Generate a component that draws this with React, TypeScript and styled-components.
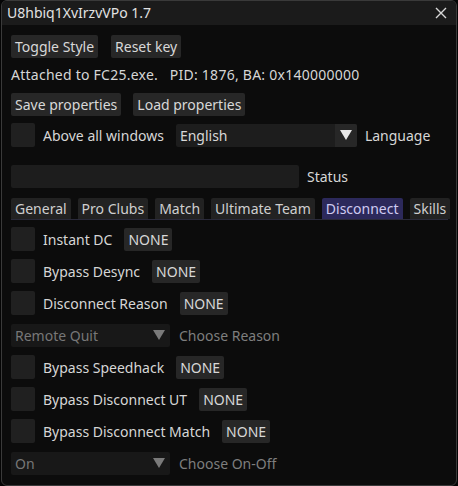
import React from "react";
import styled, { createGlobalStyle } from "styled-components";

const Global = createGlobalStyle`
  html, body { margin: 0; padding: 0; background: #050505; }
  body { font-family: "Noto Sans", "Open Sans", sans-serif; font-size: 14px; color: #d6d6d6; }
  * { box-sizing: border-box; }
`;

const Window = styled.div`
  width: 456px;
  height: 486px;
  margin-left: 1px;
  border: 1px solid #3a3a3a;
  border-radius: 6px;
  background: #0c0c0c;
  overflow: hidden;
  display: flex;
  flex-direction: column;
`;

const TitleBar = styled.div`
  height: 24px;
  background: #1b1b1b;
  display: flex;
  align-items: center;
  justify-content: space-between;
  padding: 0 6px 0 5px;
  flex-shrink: 0;
`;

const Title = styled.span`
  color: #e2e2e2;
  line-height: 24px;
`;

const Close = styled.svg`
  width: 12px;
  height: 12px;
  margin-right: 3px;
`;

const Body = styled.div`
  display: flex;
  flex-direction: column;
  padding: 9px 8px 0 9px;
`;

const Row = styled.div<{ $gap?: number; $mt?: number }>`
  display: flex;
  align-items: center;
  gap: ${(p) => p.$gap ?? 12}px;
  margin-top: ${(p) => p.$mt ?? 0}px;
  height: 24px;
`;

const Button = styled.div`
  height: 23px;
  padding: 0 4px;
  background: #272727;
  border-radius: 2px;
  display: flex;
  align-items: center;
  color: #d8d8d8;
  white-space: nowrap;
`;

const Text = styled.span<{ $dim?: boolean }>`
  color: ${(p) => (p.$dim ? "#7e7e7e" : "#d6d6d6")};
  white-space: nowrap;
`;

const InfoLine = styled.div`
  margin-top: 8px;
  height: 18px;
  line-height: 18px;
  white-space: pre;
  letter-spacing: 0.25px;
  color: #d6d6d6;
`;

const Check = styled.div`
  width: 24px;
  height: 24px;
  background: #202020;
  border-radius: 2px;
  flex-shrink: 0;
`;

const Combo = styled.div<{ $w: number; $disabled?: boolean }>`
  width: ${(p) => p.$w}px;
  height: 23px;
  background: ${(p) => (p.$disabled ? "#181818" : "#1d1d1d")};
  border-radius: 2px;
  display: flex;
  align-items: center;
  justify-content: space-between;
  padding-left: 4px;
  color: ${(p) => (p.$disabled ? "#777" : "#d8d8d8")};
`;

const Arrow = styled.div<{ $disabled?: boolean }>`
  width: 22px;
  height: 23px;
  display: flex;
  align-items: center;
  justify-content: center;
  background: ${(p) => (p.$disabled ? "transparent" : "#272727")};
  border-radius: 0 2px 2px 0;
  svg { width: 12px; height: 10px; }
`;

const Input = styled.div`
  width: 288px;
  height: 23px;
  background: #1d1d1d;
  border-radius: 2px;
`;

const Tabs = styled.div`
  display: flex;
  gap: 7px;
  margin-top: 10px;
  height: 22px;
  border-bottom: 1px solid #2a2a3a;
`;

const Tab = styled.div<{ $active?: boolean }>`
  height: 21px;
  padding: 0 4px;
  display: flex;
  align-items: center;
  background: ${(p) => (p.$active ? "#2c295b" : "#222222")};
  color: ${(p) => (p.$active ? "#cfcbf2" : "#cfcfcf")};
  border-radius: 2px 2px 0 0;
  white-space: nowrap;
`;

const List = styled.div`
  display: flex;
  flex-direction: column;
  gap: 8px;
  margin-top: 7px;
`;

const Tri = ({ dim }: { dim?: boolean }) => (
  <svg viewBox="0 0 12 10">
    <polygon points="0,0 12,0 6,10" fill={dim ? "#7a7a7a" : "#e8e8e8"} />
  </svg>
);

const CheckRow = ({ label }: { label: string }) => (
  <Row $gap={8}>
    <Check />
    <Text>{label}</Text>
    <Button style={{ marginLeft: 4 }}>NONE</Button>
  </Row>
);

const ComboRow = ({ value, label }: { value: string; label: string }) => (
  <Row $gap={9}>
    <Combo $w={159} $disabled>
      <span>{value}</span>
      <Arrow $disabled>
        <Tri dim />
      </Arrow>
    </Combo>
    <Text $dim>{label}</Text>
  </Row>
);

export default function App() {
  return (
    <>
      <Global />
      <Window>
        <TitleBar>
          <Title>U8hbiq1XvIrzvVPo 1.7</Title>
          <Close viewBox="0 0 12 12">
            <path d="M1 1 L11 11 M11 1 L1 11" stroke="#d8d8d8" strokeWidth="1.4" />
          </Close>
        </TitleBar>
        <Body>
          <Row $gap={13}>
            <Button>Toggle Style</Button>
            <Button>Reset key</Button>
          </Row>
          <InfoLine>{"Attached to FC25.exe.   PID: 1876, BA: 0x140000000"}</InfoLine>
          <Row $gap={12} $mt={8}>
            <Button>Save properties</Button>
            <Button>Load properties</Button>
          </Row>
          <Row $gap={8} $mt={7}>
            <Check />
            <Text>Above all windows</Text>
            <Combo $w={181} style={{ marginLeft: 4 }}>
              <span>English</span>
              <Arrow>
                <Tri />
              </Arrow>
            </Combo>
            <Text>Language</Text>
          </Row>
          <Row $gap={8} $mt={17}>
            <Input />
            <Text>Status</Text>
          </Row>
          <Tabs>
            <Tab>General</Tab>
            <Tab>Pro Clubs</Tab>
            <Tab>Match</Tab>
            <Tab>Ultimate Team</Tab>
            <Tab $active>Disconnect</Tab>
            <Tab>Skills</Tab>
          </Tabs>
          <List>
            <CheckRow label="Instant DC" />
            <CheckRow label="Bypass Desync" />
            <CheckRow label="Disconnect Reason" />
            <ComboRow value="Remote Quit" label="Choose Reason" />
            <CheckRow label="Bypass Speedhack" />
            <CheckRow label="Bypass Disconnect UT" />
            <CheckRow label="Bypass Disconnect Match" />
            <ComboRow value="On" label="Choose On-Off" />
          </List>
        </Body>
      </Window>
    </>
  );
}
